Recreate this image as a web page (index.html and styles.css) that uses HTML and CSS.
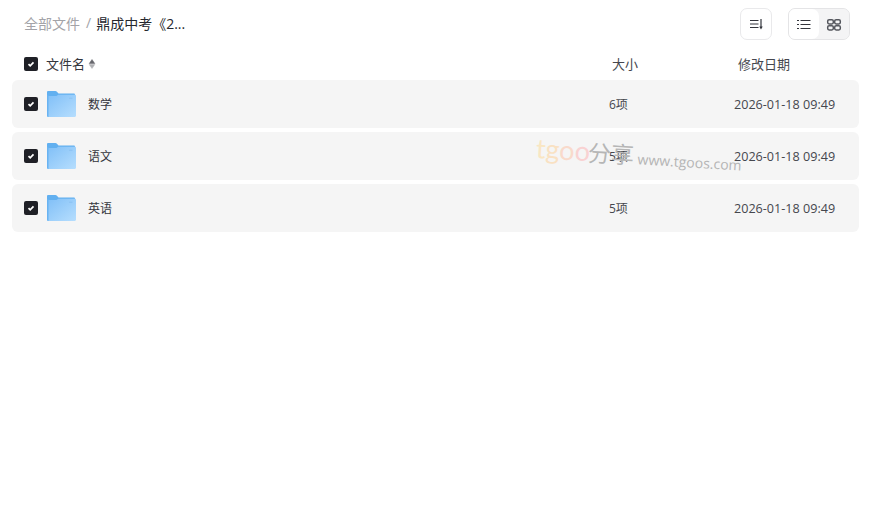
FILE: index.html
```html
<!DOCTYPE html>
<html lang="zh-CN">
<head>
<meta charset="utf-8">
<title>全部文件</title>
<link rel="stylesheet" href="styles.css">
</head>
<body>
<div class="page">
  <div class="toolbar">
    <div class="crumbs"><span class="crumb-root">全部文件</span><span class="crumb-sep">/</span><span class="crumb-cur">鼎成中考《2...</span></div>
    <div class="tools">
      <button class="tool-btn" aria-label="排序"><svg width="16" height="16" viewBox="0 0 16 16"><path d="M2 4.500h8.500M2 8h8.500M2 11.500h8.500M13 3v8" fill="none" stroke="#33353c" stroke-width="1.200"/><path d="M11.300 10.500h3.400L13 13.500z" fill="#33353c"/></svg></button>
      <div class="view-switch">
        <button class="view-btn" aria-label="列表"><svg width="16" height="16" viewBox="0 0 16 16"><path d="M4.500 4.500h10M4.500 8.500h10M4.500 12.500h10M1 4.500h2M1 8.500h2M1 12.500h2" fill="none" stroke="#33353c" stroke-width="1.200"/></svg></button>
        <button class="view-btn view-btn-on" aria-label="网格"><svg width="16" height="16" viewBox="0 0 16 16"><g fill="none" stroke="#55575e" stroke-width="1.500"><rect x="1.700" y="3.700" width="5.600" height="4.300" rx="1.400"/><rect x="8.700" y="3.700" width="5.600" height="4.300" rx="1.400"/><rect x="1.700" y="9.700" width="5.600" height="4.300" rx="1.400"/><rect x="8.700" y="9.700" width="5.600" height="4.300" rx="1.400"/></g></svg></button>
      </div>
    </div>
  </div>
  <div class="head">
    <span class="check"><svg width="10" height="10" viewBox="0 0 10 10"><path d="M2.500 5.200l1.700 1.700L7.500 3.400" fill="none" stroke="#fff" stroke-width="1.700"/></svg></span>
    <span class="head-name">文件名<svg class="sort" width="8" height="12" viewBox="0 0 8 12"><path d="M4 1.500L6.800 5.500H1.200z" fill="#66676c" stroke="#66676c" stroke-width=".5" stroke-linejoin="round"/><path d="M4 10.500L1.200 6.500h5.600z" fill="#b0b1b4" stroke="#b0b1b4" stroke-width=".5" stroke-linejoin="round"/></svg></span>
    <span class="head-size">大小</span>
    <span class="head-date">修改日期</span>
  </div>
  <div class="rows">
    <div class="row">
      <span class="check"><svg width="10" height="10" viewBox="0 0 10 10"><path d="M2.500 5.200l1.700 1.700L7.500 3.400" fill="none" stroke="#fff" stroke-width="1.700"/></svg></span>
      <svg class="folder" width="30" height="28" viewBox="0 0 30 28"><use href="#folder"/></svg>
      <span class="name">数学</span><span class="size">6项</span><span class="date">2026-01-18 09:49</span>
    </div>
    <div class="row">
      <span class="check"><svg width="10" height="10" viewBox="0 0 10 10"><path d="M2.500 5.200l1.700 1.700L7.500 3.400" fill="none" stroke="#fff" stroke-width="1.700"/></svg></span>
      <svg class="folder" width="30" height="28" viewBox="0 0 30 28"><use href="#folder"/></svg>
      <span class="name">语文</span><span class="size">5项</span><span class="date">2026-01-18 09:49</span>
    </div>
    <div class="row">
      <span class="check"><svg width="10" height="10" viewBox="0 0 10 10"><path d="M2.500 5.200l1.700 1.700L7.500 3.400" fill="none" stroke="#fff" stroke-width="1.700"/></svg></span>
      <svg class="folder" width="30" height="28" viewBox="0 0 30 28"><use href="#folder"/></svg>
      <span class="name">英语</span><span class="size">5项</span><span class="date">2026-01-18 09:49</span>
    </div>
  </div>
  <div class="watermark"><span class="wm-logo"><span class="wm-t">t</span><span class="wm-g">g</span><span class="wm-o1">o</span><span class="wm-o2">o</span></span><span class="wm-cn">分享</span><span class="wm-url">www.tgoos.com</span></div>
</div>
<svg class="defs" width="0" height="0">
  <defs>
    <linearGradient id="fg" x1="0" y1="0" x2="1" y2="1"><stop offset="0" stop-color="#80bff7"/><stop offset="1" stop-color="#b6defe"/></linearGradient>
    <symbol id="folder" viewBox="0 0 30 28">
      <path d="M1 2.200C1 1.500 1.500 1 2.200 1h7.300c.5 0 .9.2 1.200.5l1.800 2h15.300c.7 0 1.200.5 1.200 1.200V10H1z" fill="#62b0f0"/>
      <path d="M1 6h9.500l1.700-1.200h16.600c.7 0 1.200.5 1.200 1.200v19.800c0 .7-.5 1.200-1.200 1.200H2.200C1.500 27 1 26.500 1 25.800z" fill="url(#fg)"/>
      <path d="M1 5v20.800C1 26.500 1.500 27 2.200 27H2.500V5z" fill="#69b3f2"/>
      <rect x="23" y="7.500" width="3.500" height="1.500" fill="#8fc5f5"/>
    </symbol>
  </defs>
</svg>
</body>
</html>
```
FILE: styles.css
```css
* { box-sizing: border-box; }
html, body { margin: 0; padding: 0; background: #fff; }
body { font-family: "Open Sans", "Noto Sans CJK SC", sans-serif; font-size: 12px; color: #2f3138; }
.page { position: relative; width: 874px; height: 514px; overflow: hidden; padding: 8px 15px 0 12px; }
.defs { position: absolute; }
.toolbar { display: flex; justify-content: space-between; align-items: center; height: 32px; padding: 0 9px 0 12px; }
.crumbs { display: flex; align-items: center; font-size: 14px; margin-top: -3px; }
.crumb-root { color: #a3a3a8; }
.crumb-sep { color: #a3a3a8; margin: 0 5px 0 6px; }
.crumb-cur { color: #25272e; }
.tools { display: flex; gap: 16px; }
.tool-btn { width: 32px; height: 32px; padding: 0; display: flex; align-items: center; justify-content: center; background: #fff; border: 1px solid #e9e9eb; border-radius: 7px; }
.view-switch { display: flex; width: 62px; height: 32px; border: 1px solid #e4e4e6; border-radius: 7px; overflow: hidden; background: #f4f4f5; }
.view-btn { flex: 1; padding: 0; display: flex; align-items: center; justify-content: center; border: 0; background: #f4f4f5; }
.view-btn:first-child { background: #fff; border-radius: 0 7px 7px 0; }
.head { display: grid; grid-template-columns: 14px 1fr 118px 121px; align-items: center; column-gap: 8px; height: 40px; padding: 7px 0 0 12px; font-size: 13px; color: #45474e; }
.head-name { display: flex; align-items: center; gap: 3px; color: #34363d; }
.rows { display: flex; flex-direction: column; gap: 4px; }
.row { display: grid; grid-template-columns: 14px 30px 1fr 125px 101px; align-items: center; height: 48px; padding: 0 24px 0 12px; background: #f5f5f5; border-radius: 6px; }
.check { width: 14px; height: 14px; display: flex; align-items: center; justify-content: center; background: #1f2026; border-radius: 2px; }
.folder { margin-left: 8px; }
.name { margin-left: 20px; color: #34363d; }
.size { color: #45474e; }
.date { color: #45474e; font-size: 12.600px; white-space: nowrap; }
.watermark { position: absolute; left: 536px; top: 131px; display: flex; align-items: baseline; white-space: nowrap; transform: rotate(3.500deg); transform-origin: left center; pointer-events: none; }
.wm-logo { font-family: "Lato", sans-serif; font-size: 27px; opacity: .4; }
.wm-t { color: #ffd27a; }
.wm-g { color: #ffc57a; }
.wm-o1 { color: #ffb48f; }
.wm-o2 { color: #ff9f9f; }
.wm-cn { font-size: 23px; color: #b6b6b6; margin-left: -2px; }
.wm-url { font-size: 14px; color: #b4b4b4; margin-left: 4px; }
```
